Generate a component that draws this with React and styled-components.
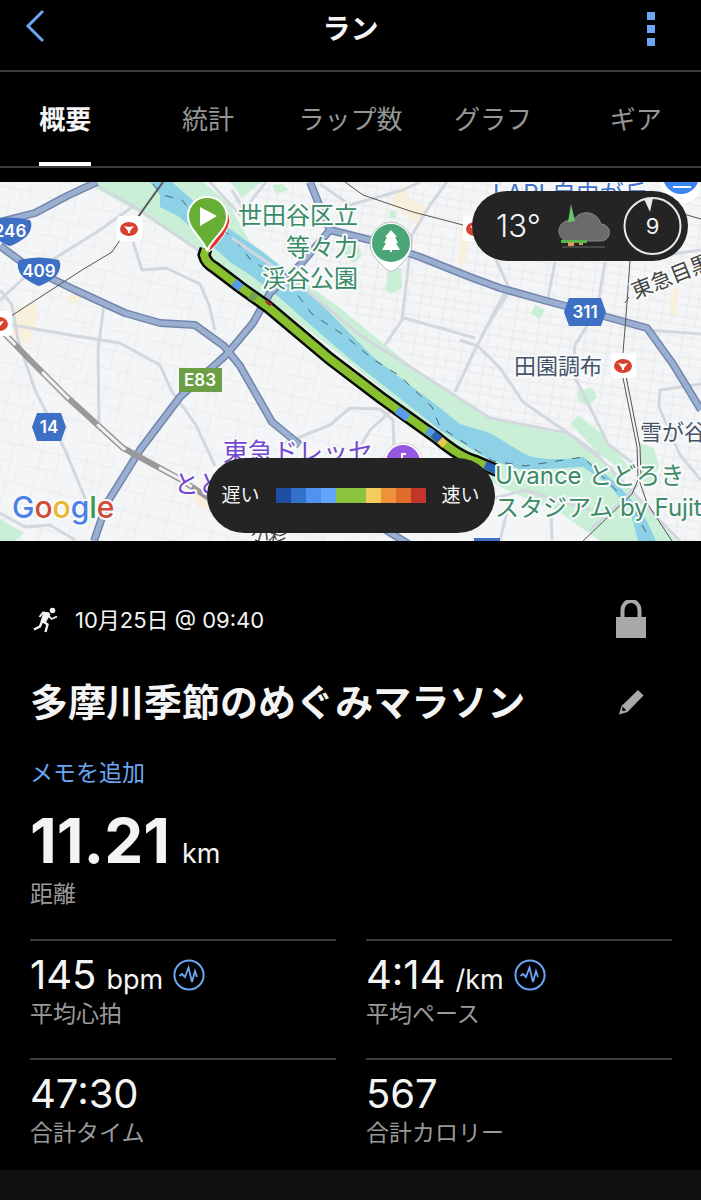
import React, { useState } from "react";
import styled, { createGlobalStyle } from "styled-components";

const GlobalStyle = createGlobalStyle`
  * { box-sizing: border-box; }
  body {
    margin: 0;
    background: #000;
    color: #f4f4f4;
    font-family: Inter, "Noto Sans CJK JP", sans-serif;
  }
  button {
    border: 0;
    padding: 0;
    background: none;
    color: inherit;
    font: inherit;
    cursor: pointer;
  }
  svg { display: block; }
`;

const Page = styled.main`
  min-height: 100vh;
  display: flex;
  flex-direction: column;
  overflow: hidden;
`;

const Header = styled.header`
  height: 72px;
  padding: 0 24px 12px;
  display: grid;
  grid-template-columns: 60px 1fr 60px;
  align-items: center;
  border-bottom: 2px solid #3c3c3c;
`;

const HeaderTitle = styled.h1`
  margin: 0;
  text-align: center;
  font-size: 28px;
  line-height: 40px;
  font-weight: 700;
`;

const HeaderButton = styled.button`
  height: 48px;
  display: flex;
  align-items: ${(p) => (p.$end ? "center" : "flex-start")};
  padding-top: ${(p) => (p.$end ? 0 : 4)}px;
  justify-content: ${(p) => (p.$end ? "flex-end" : "flex-start")};
  color: #6ba6f5;
`;

const DotsIcon = styled.svg`
  margin-right: 22px;
`;

const TabBar = styled.nav`
  margin: 0 -6px;
  height: 96px;
  display: grid;
  grid-template-columns: repeat(5, 1fr);
  border-bottom: 2px solid #3c3c3c;
`;

const Tab = styled.button`
  display: flex;
  justify-content: center;
  font-size: 26px;
  color: ${(p) => (p.$active ? "#f4f4f4" : "#969696")};
  font-weight: ${(p) => (p.$active ? 700 : 400)};
`;

const TabText = styled.span`
  height: 94px;
  display: flex;
  align-items: center;
  white-space: nowrap;
  border-bottom: 4px solid ${(p) => (p.$active ? "#fff" : "transparent")};
`;

const MapPanel = styled.section`
  position: relative;
  height: 359px;
  margin-top: 14px;
  background: #f4f5f7;
  overflow: hidden;
`;

const MapDrawing = styled.svg`
  width: 100%;
  height: 100%;
`;

const MapText = styled.text`
  font-family: Inter, "Noto Sans CJK JP", sans-serif;
  font-size: ${(p) => p.$size || 24}px;
  font-weight: ${(p) => p.$weight || 400};
  fill: ${(p) => p.$color || "#3b8a68"};
  stroke: ${(p) => (p.$plain ? "none" : "#f8fafa")};
  stroke-width: 4px;
  stroke-linejoin: round;
  paint-order: stroke;
`;

const WeatherPill = styled.div`
  position: absolute;
  top: 9px;
  right: 13px;
  height: 70px;
  padding: 0 6px 0 24px;
  display: flex;
  align-items: center;
  border-radius: 35px;
  background: #242424;
`;

const Temperature = styled.span`
  width: 60px;
  font-size: 31px;
  font-weight: 300;
  line-height: 40px;
`;

const Wind = styled.div`
  display: grid;
  place-items: center;
  margin-left: 13px;

  > * { grid-area: 1 / 1; }
`;

const WindSpeed = styled.span`
  font-size: 22px;
  line-height: 28px;
`;

const LegendRow = styled.div`
  position: absolute;
  left: 0;
  right: 0;
  bottom: 8px;
  display: flex;
  justify-content: center;
`;

const Legend = styled.div`
  width: 288px;
  height: 75px;
  display: flex;
  align-items: center;
  justify-content: center;
  gap: 16px;
  border-radius: 38px;
  background: #242424;
  font-size: 19px;
  line-height: 28px;
`;

const Scale = styled.div`
  display: flex;
`;

const Swatch = styled.span`
  width: 15px;
  height: 15px;
  background: ${(p) => p.$color};
`;

const Summary = styled.section`
  padding: 51px 29px 0 30px;
`;

const Row = styled.div`
  display: flex;
  align-items: center;
  justify-content: space-between;
`;

const When = styled.div`
  display: flex;
  align-items: center;
  gap: 16px;
  height: 56px;
  font-size: 22px;
  line-height: 32px;
`;

const IconButton = styled.button`
  width: 82px;
  height: 56px;
  display: flex;
  align-items: center;
  justify-content: center;
  color: #a9a9a9;
`;

const ActivityName = styled.h2`
  margin: 0;
  padding: 24px 0 0;
  font-size: 38px;
  line-height: 60px;
  font-weight: 700;
`;

const NameRow = styled(Row)`
  ${IconButton} { margin-top: 24px; }
`;

const MemoButton = styled.button`
  display: block;
  margin-top: 25px;
  font-size: 23px;
  line-height: 32px;
  color: #6ba6f5;
`;

const Stats = styled.dl`
  margin: 0;
  display: grid;
  grid-template-columns: 1fr 1fr;
  column-gap: 30px;
`;

const Stat = styled.div`
  display: flex;
  flex-direction: column-reverse;
  justify-content: flex-end;
  height: 119px;
  padding-top: 10px;
  border-top: 2px solid #3c3c3c;

  &:nth-last-child(-n + 2) { height: 112px; }
`;

const Distance = styled(Stat)`
  grid-column: 1 / -1;
  height: 150px;
  padding-top: 14px;
  border-top: 0;
`;

const StatLabel = styled.dt`
  font-size: 23px;
  line-height: 30px;
  color: #999;
`;

const StatValue = styled.dd`
  margin: 0;
  display: flex;
  align-items: baseline;
  gap: ${(p) => (p.$large ? 12 : 10)}px;
  font-size: ${(p) => (p.$large ? 62 : 40)}px;
  line-height: ${(p) => (p.$large ? 76 : 48)}px;
  font-weight: ${(p) => (p.$large ? 700 : 400)};
`;

const Unit = styled.span`
  font-size: 27px;
  line-height: 32px;
  font-weight: 400;
`;

const PulseButton = styled.button`
  align-self: center;
  color: #6ba6f5;
`;

const NextSection = styled.footer`
  flex: 1;
  min-height: 30px;
  background: #101010;
`;

const paceColors = [
  "#1f4fa5", "#3372cc", "#4f92f0", "#62a5fa", "#8bc53f",
  "#8bc53f", "#f4cc5c", "#f0913b", "#df6e2c", "#c3342a",
];

const ROUTE = "M206 249 L204 255 Q206 263 215 268 L240 287 L268 307 L330 359 L380 397 L437 438 Q460 457 475 461 L498 471";

const majorRoads = [
  "M97 182 L67 196 L35 213 L0 222",
  "M0 246 L30 268 L75 290 L125 313 L160 323 L195 325 L224 346 L240 366 L272 422 L300 445",
  "M370 520 L410 545",
  "M94 541 L107 503 L140 450 L180 397 L227 354 L253 323 L270 293 L300 265 L330 230 L320 207 L310 182",
  "M330 230 L370 240 L420 257 L470 277 L500 288 L543 300 L607 317 L647 328 L673 364 L701 410",
];

const minorRoads = [
  "M0 300 L25 277 L60 255 L100 230 L135 205",
  "M133 242 L142 270 L166 268 L200 284 L209 305 L215 330",
  "M104 305 L98 350 L99 422",
  "M12 325 L70 335 L120 343 L160 365 L171 390 L196 425 L215 466",
  "M0 290 L12 305 L18 340 L35 390 L65 450 L90 510",
  "M0 513 L25 527 L50 525 L75 540",
  "M95 184 L143 212 L215 262",
  "M280 445 L330 425 L350 408 L380 409 L393 420 L394 450",
  "M390 412 L370 430 L360 447",
  "M232 238 L300 285 L360 335 L440 386 L490 418 L567 433 L600 458 L640 500 L680 541",
  "M447 182 L430 205 L412 235 L402 320 L385 345",
  "M404 318 L440 328 L475 338",
  "M500 182 L480 225 L510 290 L488 325",
  "M555 262 L548 298",
  "M505 292 L485 330 L470 360 L455 392",
  "M605 262 L597 310 L575 345 L573 374 L585 397 L608 444 L638 467",
  "M460 340 L478 346 L500 368 L523 402 L578 440 L600 456",
  "M320 184 L350 205 L403 190 L420 182",
  "M647 330 L701 334",
  "M701 384 L660 390 L659 407 L680 455 L701 480",
  "M630 260 L701 250",
  "M440 500 L480 502 L525 490 L590 510",
  "M500 540 L510 500",
  "M552 540 L551 515",
  "M232 190 L250 220",
  "M210 182 L240 215 L266 182",
  "M638 484 L620 503 L590 530",
];

const Shield = ({ x, y, label, width = 40 }) => (
  <g transform={`translate(${x} ${y})`}>
    <path d={`M${-width / 2} -11 Q0 -16 ${width / 2} -11 Q${width / 2 + 4} -3 16 6 Q5 14 0 15 Q-5 14 -16 6 Q${-width / 2 - 4} -3 ${-width / 2} -11Z`} fill="#3d70c4" />
    <MapText $plain $size={17} $weight={600} $color="#fff" textAnchor="middle" y="6">{label}</MapText>
  </g>
);

const Hexagon = ({ x, y, label, half }) => (
  <g transform={`translate(${x} ${y})`}>
    <path d={`M${5 - half} -14 H${half - 5} L${half} 0 L${half - 5} 14 H${5 - half} L${-half} 0Z`} fill="#3d70c4" />
    <MapText $plain $size={17} $weight={600} $color="#fff" textAnchor="middle" y="6">{label}</MapText>
  </g>
);

const Station = ({ x, y }) => (
  <g transform={`translate(${x} ${y})`}>
    <rect x="-12" y="-13" width="25" height="25" rx="4" fill="#fff" />
    <ellipse rx="9" ry="7" fill="#d8402f" />
    <path d="M-5 -3 L0 -2 L5 -3 L1 2 V4 H-1 V2Z" fill="#fff" />
  </g>
);

const RouteMap = () => (
  <MapDrawing viewBox="0 182 701 359" preserveAspectRatio="xMidYMid slice" role="img" aria-label="ルートマップ">
    <defs>
      <pattern id="streets" width="46" height="38" patternUnits="userSpaceOnUse" patternTransform="rotate(14)">
        <path d="M0 9 H46 M0 28 L30 26 V38 M12 0 V28 M30 9 V26 M38 0 V9 M22 28 V38" fill="none" stroke="#e8eaec" strokeWidth="1" />
      </pattern>
      <pattern id="blocks" width="24" height="20" patternUnits="userSpaceOnUse" patternTransform="rotate(9)">
        <path d="M0 6 H24 M0 14 H24 M7 0 V20 M17 0 V14" fill="none" stroke="#e7e8eb" strokeWidth="1" />
      </pattern>
    </defs>
    <rect y="182" width="701" height="359" fill="#f4f5f7" />
    <path d="M0 182 H200 L440 440 V541 H0Z" fill="url(#streets)" />
    <path d="M200 182 H701 V541 H640 L440 386Z" fill="url(#blocks)" />
    <g fill="#f8f0dc">
      <path d="M8 312 L36 302 L38 315 L30 345 L14 338Z" />
      <path d="M66 296 L82 293 L80 301 L68 304Z" />
      <path d="M390 205 L402 184 L412 200 L426 207 L421 228 L408 216Z" />
      <path d="M462 222 H470 L466 260 L458 266Z" />
      <path d="M192 493 L215 488 L222 510 L198 508Z" />
      <path d="M671 290 L679 288 L676 316 L670 314Z" />
    </g>
    <g fill="#c9f0d7">
      <path d="M88 184 L96 182 H262 L230 206 L250 242 L290 272 L340 308 L400 357 L440 387 L490 418 L567 435 L592 448 L622 478 L645 505 L676 541 H600 L562 514 L498 486 L440 436 L330 347 L240 278 L205 256 L140 213Z" />
      <path d="M272 185 L282 184 L289 190 L276 194Z" />
      <path d="M390 210 L396 212 V218 H389Z" />
      <path d="M344 245 L358 244 L362 256 L354 263 L345 258Z" />
      <path d="M388 268 H401 L402 288 L390 294 L386 290Z" />
      <path d="M535 305 L545 310 L540 319 L531 314Z" />
      <path d="M577 391 L592 388 L597 397 L589 406 L579 402Z" />
      <path d="M578 415 L602 434 L615 450 L632 470 L626 472 L600 455 L571 424Z" />
      <path d="M640 443 L654 448 L659 467 L650 484 L642 480Z" />
      <path d="M0 519 L24 533 L15 541 H0Z" />
    </g>
    <path d="M203 182 H230 L241 196 L230 205Z" fill="#f4f5f7" />
    <path d="M150 182 H172 Q205 213 263 252 L297 280 L330 313 L373 357 L440 408 L460 424 L490 433 L523 453 Q540 463 583 457 L603 472 L620 487 L643 513 L656 541 H638 L630 510 L607 483 L583 467 L523 470 L490 460 L440 430 L350 359 L307 322 L280 298 L250 275 L230 262 L178 216 L160 207 L160 195Z" fill="#8cd1e6" />
    <path d="M153 184 L163 195 L182 200 L190 210 L233 237 L250 259 L290 285 L312 314 L345 336 L374 360 L400 376 L432 407 L440 427 L493 461 L525 466 L583 457 L610 484 L635 510 L650 541" fill="none" stroke="#4a6470" strokeWidth="1" strokeDasharray="8 9" />

    <g fill="none" stroke="#d3d8df" strokeWidth="3" strokeLinejoin="round">
      {minorRoads.map((d) => <path key={d} d={d} />)}
    </g>
    <g fill="none" strokeLinejoin="round">
      <g stroke="#7286ad" strokeWidth="8">{majorRoads.map((d) => <path key={d} d={d} />)}</g>
      <g stroke="#9bafd0" strokeWidth="5">{majorRoads.map((d) => <path key={d} d={d} />)}</g>
    </g>

    <g fill="none" stroke="#555" strokeWidth="1">
      <path d="M163 182 L138 217" strokeWidth="2" />
      <path d="M120 240 L112 252 L82 270 L8 318" />
      <path d="M345 182 L363 195 L413 212 L463 225" />
      <path d="M588 182 V192 M630 260 L627 303 L623 353 M623 378 L637 447 L638 477 L647 503 L672 541" />
      <path d="M626 376 L640 447 L641 477 M638 480 L632 494 L583 541 M625 303 L629 297 M680 213 L701 219" />
    </g>
    <path d="M3 332 L30 360 L67 397 L123 448 L180 479 L215 502" fill="none" stroke="#999" strokeWidth="6" />
    <path d="M3 332 L30 360 L67 397 L123 448 L180 479 L215 502" fill="none" stroke="#f2f2f2" strokeWidth="3" strokeDasharray="38 38" strokeDashoffset="20" />

    <path d={ROUTE} fill="none" stroke="#080808" strokeWidth="13" />
    <path d={ROUTE} fill="none" stroke="#88c02f" strokeWidth="8" />
    <g fill="none" strokeWidth="8">
      <path d="M234 282 L241 288 M397 410 L408 418 M427 430 L433 434" stroke="#579bee" />
      <path d="M433 434 L440 440 M485 465 L498 471" stroke="#2d61b5" />
      <path d="M440 440 L445 445" stroke="#edc64f" />
      <path d="M250 295 L256 299" stroke="#769e54" />
      <path d="M266 301 L271 305" stroke="#9b322b" strokeWidth="3" />
    </g>

    <Shield x={10} y={231} label="246" />
    <Shield x={39} y={271} label="409" />
    <Hexagon x={585} y={312} label="311" half={21} />
    <Hexagon x={49} y={427} label="14" half={17} />
    <rect x="179" y="368" width="43" height="24" fill="#6b9e45" />
    <MapText $plain $size={17} $weight={600} $color="#fff" textAnchor="middle" x="200" y="386">E83</MapText>
    <Station x={129} y={229} />
    <Station x={-1} y={324} />
    <Station x={623} y={366} />
    <Station x={475} y={229} />

    <MapText x="358" y="224" textAnchor="end">世田谷区立</MapText>
    <MapText x="358" y="256" textAnchor="end">等々力</MapText>
    <MapText x="358" y="287" textAnchor="end">渓谷公園</MapText>
    <MapText x="495" y="484">Uvance とどろき</MapText>
    <MapText x="495" y="516">スタジアム by Fujitsu</MapText>
    <MapText x="223" y="461" $size={25} $color="#7446d0">東急ドレッセ</MapText>
    <MapText x="174" y="493" $size={25} $color="#7446d0">とど</MapText>
    <MapText x="493" y="202" $color="#416fcb">LAPI 自由が丘</MapText>
    <MapText x="514" y="374" $size={22} $color="#465469">田園調布</MapText>
    <MapText x="640" y="440" $size={22} $color="#465469">雪が谷</MapText>
    <MapText $size={21} $color="#444" transform="translate(635 299) rotate(-22)">東急目黒</MapText>
    <MapText $size={18} $color="#444" transform="translate(250 538) rotate(16)">小杉</MapText>
    <rect x="474" y="538" width="26" height="3" fill="#3d70c4" />

    <path d="M391 222 A22 22 0 0 1 405 260 L395 270 Q391 273 387 270 L377 260 A22 22 0 0 1 391 222Z" fill="#fff" stroke="#b8c0c0" strokeWidth="1" />
    <circle cx="391" cy="243" r="19" fill="#4aa677" />
    <path d="M391 230 L397 237 H395 L398 243 H396 L400 250 H392 V252 H390 V250 H382 L386 243 H384 L387 237 H385Z" fill="#fff" />
    <circle cx="403" cy="463" r="20" fill="#fff" stroke="#d6d6d6" strokeWidth="1" />
    <circle cx="403" cy="462" r="17" fill="#9657e2" />
    <path d="M402 461 V454 H406" fill="none" stroke="#fff" strokeWidth="2" />
    <path d="M660 182 Q663 196 685 204 Q705 194 699 182Z" fill="#fff" />
    <circle cx="681" cy="176" r="18" fill="#3b86f0" />
    <path d="M673 187 H691" stroke="#fff" strokeWidth="2" />

    <path d="M214 205 Q230 209 230 221 Q228 234 209 252Z" fill="#e23431" stroke="#fff" strokeWidth="1" />
    <path d="M207 197 C220 197 227 207 227 217 C227 229 216 235 207 250 C200 235 188 229 188 216 C188 206 196 197 207 197Z" fill="#67ae35" stroke="#fff" strokeWidth="2" />
    <path d="M200 207 L217 216 L200 226Z" fill="#fff" />

    <MapText x="12" y="518" $size={30} $weight={500}>
      <tspan fill="#4a80e8">G</tspan>
      <tspan fill="#d34a3d">o</tspan>
      <tspan fill="#edb52c">o</tspan>
      <tspan fill="#4a80e8">g</tspan>
      <tspan fill="#3a9a50">l</tspan>
      <tspan fill="#d34a3d">e</tspan>
    </MapText>
  </MapDrawing>
);

const WeatherIcon = () => (
  <svg width="54" height="46" viewBox="0 0 54 46" aria-hidden="true">
    <path d="M10 38 A10 10 0 1 1 17 18 A15 15 0 0 1 45 21 A8 8 0 0 1 45 38Z" fill="#6b6b6b" stroke="#858585" strokeWidth="1" />
    <path d="M15 1 L19 18 L12 19Z" fill="#62c46b" />
    <path d="M5 37 H31 V40 H5Z" fill="#55b84f" />
    <path d="M12 39 H18 V43 H12Z M23 40 H27 V42 H23Z" fill="#dc985b" />
    <path d="M6 44 H49" stroke="#666" strokeWidth="1" />
  </svg>
);

const PulseIcon = () => (
  <svg width="32" height="32" viewBox="0 0 32 32" fill="none" stroke="currentColor" aria-hidden="true">
    <circle cx="16" cy="16" r="14.6" strokeWidth="2" />
    <path d="M6.5 17 L9 15 L12 18 L15.5 8.5 L19 23 L22 12 L24 18" strokeWidth="1.8" strokeLinejoin="miter" />
  </svg>
);

const RunnerIcon = () => (
  <svg width="29" height="28" viewBox="0 0 29 28" fill="none" stroke="#f4f4f4" aria-hidden="true">
    <circle cx="22.5" cy="4.5" r="2.8" fill="#f4f4f4" stroke="none" />
    <path d="M19 7.5 L13 6.5 L9.5 11" strokeWidth="2" />
    <path d="M14 6 L20 8 L18 12 L15 17 L11 15.5Z" fill="#f4f4f4" strokeWidth="1" />
    <path d="M18.5 9.5 L21.5 13 L27 10.5" strokeWidth="1.8" />
    <path d="M12.5 15 L17.5 18.5 L15.5 26" strokeWidth="2.4" />
    <path d="M12 15.5 L10 20.5 L4 23.5" strokeWidth="2.4" />
  </svg>
);

const stats = [
  { label: "平均心拍", value: "145", unit: "bpm", pulse: true },
  { label: "平均ペース", value: "4:14", unit: "/km", pulse: true },
  { label: "合計タイム", value: "47:30" },
  { label: "合計カロリー", value: "567" },
];

const tabs = ["概要", "統計", "ラップ数", "グラフ", "ギア"];

export default function App() {
  const [active, setActive] = useState("概要");
  return (
    <Page lang="ja">
      <GlobalStyle />
      <Header>
        <HeaderButton aria-label="戻る">
          <svg width="22" height="34" viewBox="0 0 22 34" fill="none" stroke="currentColor" strokeWidth="3" aria-hidden="true">
            <path d="M19 2 L4 17 L19 32" />
          </svg>
        </HeaderButton>
        <HeaderTitle>ラン</HeaderTitle>
        <HeaderButton $end aria-label="メニュー">
          <DotsIcon width="8" height="34" viewBox="0 0 8 34" fill="currentColor" aria-hidden="true">
            <path d="M0 0 H8 V8 H0Z M0 13 H8 V21 H0Z M0 26 H8 V34 H0Z" />
          </DotsIcon>
        </HeaderButton>
      </Header>

      <TabBar>
        {tabs.map((name) => (
          <Tab key={name} $active={name === active} aria-pressed={name === active} onClick={() => setActive(name)}>
            <TabText $active={name === active}>{name}</TabText>
          </Tab>
        ))}
      </TabBar>

      <MapPanel>
        <RouteMap />
        <WeatherPill>
          <Temperature>13°</Temperature>
          <WeatherIcon />
          <Wind>
            <svg width="59" height="60" viewBox="0 0 59 60" aria-hidden="true">
              <circle cx="29.5" cy="30" r="28" fill="none" stroke="#e8e8e8" strokeWidth="2" />
              <path d="M21 3 Q25 1 30 2 L27 16Z" fill="#e8e8e8" />
            </svg>
            <WindSpeed>9</WindSpeed>
          </Wind>
        </WeatherPill>
        <LegendRow>
          <Legend>
            <span>遅い</span>
            <Scale>{paceColors.map((c, i) => <Swatch key={i} $color={c} />)}</Scale>
            <span>速い</span>
          </Legend>
        </LegendRow>
      </MapPanel>

      <Summary>
        <Row>
          <When>
            <RunnerIcon />
            <time>10月25日 @ 09:40</time>
          </When>
          <IconButton aria-label="プライバシー">
            <svg width="32" height="40" viewBox="0 0 32 40" aria-hidden="true">
              <path d="M7.5 18 V10 A8 8.5 0 0 1 24.5 10 V18" fill="none" stroke="currentColor" strokeWidth="4" />
              <path d="M1 17 H31 V38 H1Z" fill="currentColor" />
            </svg>
          </IconButton>
        </Row>
        <NameRow>
          <ActivityName>多摩川季節のめぐみマラソン</ActivityName>
          <IconButton aria-label="名前を編集">
            <svg width="26" height="26" viewBox="0 0 26 26" aria-hidden="true">
              <path d="M20 1 L25.5 6.5 L9.5 23 L1 25.5 L3.5 17Z" fill="currentColor" />
              <path d="M4.5 17.5 L8.5 21.5 L4 22Z" fill="#000" />
            </svg>
          </IconButton>
        </NameRow>
        <MemoButton>メモを追加</MemoButton>
        <Stats>
          <Distance>
            <StatLabel>距離</StatLabel>
            <StatValue $large>11.21<Unit>km</Unit></StatValue>
          </Distance>
          {stats.map((s) => (
            <Stat key={s.label}>
              <StatLabel>{s.label}</StatLabel>
              <StatValue>
                {s.value}
                {s.unit && <Unit>{s.unit}</Unit>}
                {s.pulse && <PulseButton aria-label={`${s.label}のグラフ`}><PulseIcon /></PulseButton>}
              </StatValue>
            </Stat>
          ))}
        </Stats>
      </Summary>
      <NextSection />
    </Page>
  );
}
